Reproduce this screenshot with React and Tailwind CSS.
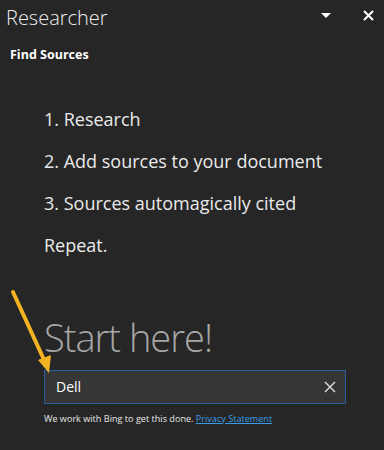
import React from "react";

export default function App() {
  return (
    <div
      className="relative w-[384px] h-[450px] bg-[#262626] text-white overflow-hidden"
      style={{ fontFamily: '"Open Sans", "Noto Sans", sans-serif' }}
    >
      <div className="flex items-start justify-between h-[36px] pl-[6px] pr-[10px] pt-[5px]">
        <div className="text-[20px] font-light text-[#f0f0f0] leading-[26px]">Researcher</div>
        <div className="flex items-center gap-[32px] pt-[5px]">
          <svg width="10" height="6" viewBox="0 0 10 6">
            <polygon points="0,0 10,0 5,5" fill="#ffffff" />
          </svg>
          <svg width="11" height="11" viewBox="0 0 11 11">
            <path d="M1 1 L10 10 M10 1 L1 10" stroke="#ffffff" strokeWidth="2" />
          </svg>
        </div>
      </div>
      <div className="pl-[10px] pt-[13px] text-[12.5px] font-bold text-white leading-none">Find Sources</div>

      <div className="pl-[44px] pt-[46px] flex flex-col gap-[20px] text-[18px] text-[#eaeaea] leading-[22px]">
        <div>1. Research</div>
        <div>2. Add sources to your document</div>
        <div>3. Sources automagically cited</div>
        <div>Repeat.</div>
      </div>

      <div className="pl-[44px] pt-[62px]">
        <div className="text-[38px] font-light tracking-[-1px] text-[#a6a6a6] leading-none">
          Start here!
        </div>
        <div className="mt-[14px] w-[302px] h-[34px] border border-[#2a5ba0] bg-[#363636] flex items-center justify-between pl-[11px] pr-[9px]">
          <span className="text-[14px] text-white">Dell</span>
          <svg width="12" height="12" viewBox="0 0 12 12">
            <path d="M1 1 L11 11 M11 1 L1 11" stroke="#e6e6e6" strokeWidth="1.3" />
          </svg>
        </div>
        <div className="mt-[10px] text-[9.1px] text-[#e8e8e8] leading-none">
          We work with Bing to get this done.{" "}
          <span className="text-[#3a9be8] underline">Privacy Statement</span>
        </div>
      </div>

      <svg className="absolute left-0 top-0" width="384" height="450" viewBox="0 0 384 450">
        <line x1="13" y1="292" x2="45" y2="362" stroke="#f3b322" strokeWidth="4" strokeLinecap="round" />
        <polygon points="49,373 38,360 51,355" fill="#f3b322" />
      </svg>
    </div>
  );
}
